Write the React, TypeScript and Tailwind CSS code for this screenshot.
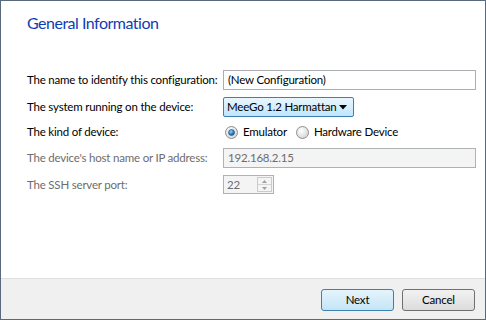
import React from "react"

const Radio = ({ checked }: { checked?: boolean }) => (
  <svg width="13" height="13" viewBox="0 0 13 13" className="shrink-0">
    <defs>
      <radialGradient id={checked ? "rg1" : "rg0"} cx="0.4" cy="0.35" r="0.7">
        <stop offset="0" stopColor="#ffffff" />
        <stop offset="1" stopColor="#d4d4d4" />
      </radialGradient>
      <radialGradient id="dot" cx="0.4" cy="0.35" r="0.7">
        <stop offset="0" stopColor="#9fd4f5" />
        <stop offset="0.6" stopColor="#2a7fc9" />
        <stop offset="1" stopColor="#134f8c" />
      </radialGradient>
    </defs>
    <circle cx="6.5" cy="6.5" r="6" fill={`url(#${checked ? "rg1" : "rg0"})`} stroke="#8e8f8f" />
    {checked && <circle cx="6.5" cy="6.5" r="3" fill="url(#dot)" stroke="#1b4e82" strokeWidth="0.6" />}
  </svg>
)

function Label({ children, disabled }: { children: React.ReactNode; disabled?: boolean }) {
  return (
    <div className={`w-[196px] shrink-0 whitespace-nowrap ${disabled ? "text-[#6d6d6d]" : "text-black"}`}>{children}</div>
  )
}

export default function App() {
  return (
    <div
      className="w-[486px] h-[320px] border border-[#5a6a7a] bg-white flex flex-col text-[11.5px] tracking-[-0.2px] leading-[16px] whitespace-nowrap"
      style={{ fontFamily: '"Segoe UI", Lato, sans-serif' }}
    >
      <div className="flex-1 pl-[26px] pr-[9px]">
        <div className="mt-[11px] text-[16px] tracking-[-0.5px] leading-[22px] text-[#0f3cb4]">General Information</div>

        <div className="flex items-center h-[20px] mt-[36px]">
          <Label>The name to identify this configuration:</Label>
          <div className="flex-1 h-[20px] border border-[#abadb3] px-[4px] flex items-center bg-white">
            (New Configuration)
          </div>
        </div>

        <div className="flex items-center h-[20px] mt-[7px]">
          <Label>The system running on the device:</Label>
          <div className="w-[131px] h-[20px] border border-[#3c7fb1] rounded-[2px] bg-gradient-to-b from-[#eaf6fd] to-[#bee6fd] flex items-center pl-[3px] pr-[6px]">
            <span className="flex-1">MeeGo 1.2 Harmattan</span>
            <svg width="8" height="5" viewBox="0 0 8 5">
              <path d="M0 0 H8 L4 4.5 Z" fill="#000" />
            </svg>
          </div>
        </div>

        <div className="flex items-center h-[20px] mt-[5px]">
          <Label>The kind of device:</Label>
          <div className="flex items-center gap-[5px] pl-[2px]">
            <Radio checked />
            <span>Emulator</span>
          </div>
          <div className="flex items-center gap-[5px] ml-[9px]">
            <Radio />
            <span>Hardware Device</span>
          </div>
        </div>

        <div className="flex items-center h-[20px] mt-[6px]">
          <Label disabled>The device's host name or IP address:</Label>
          <div className="flex-1 h-[20px] border border-[#adb2b5] bg-[#f4f4f4] px-[4px] flex items-center text-[#6d6d6d]">
            192.168.2.15
          </div>
        </div>

        <div className="flex items-center h-[19px] mt-[7px]">
          <Label disabled>The SSH server port:</Label>
          <div className="w-[51px] h-[19px] border border-[#adb2b5] bg-[#f4f4f4] flex items-stretch text-[#6d6d6d]">
            <span className="flex-1 pl-[3px] flex items-center">22</span>
            <div className="w-[15px] my-[1px] mr-[1px] border border-[#c9cbcd] flex flex-col bg-[#f4f4f4]">
              <div className="flex-1 flex items-center justify-center border-b border-[#d5d5d5]">
                <svg width="5" height="3" viewBox="0 0 5 3"><path d="M0 3 L2.5 0 L5 3 Z" fill="#a0a0a0" /></svg>
              </div>
              <div className="flex-1 flex items-center justify-center">
                <svg width="5" height="3" viewBox="0 0 5 3"><path d="M0 0 L2.5 3 L5 0 Z" fill="#a0a0a0" /></svg>
              </div>
            </div>
          </div>
        </div>
      </div>

      <div className="h-[41px] border-t border-[#dfdfdf] bg-[#f0f0f0] flex items-center justify-end gap-[8px] pr-[10px] pt-[1px]">
        <button className="w-[73px] h-[22px] rounded-[3px] border border-[#3c7fb1] bg-gradient-to-b from-[#e5f4fc] to-[#c4e5f6] text-black">
          Next
        </button>
        <button className="w-[73px] h-[22px] rounded-[3px] border border-[#707070] bg-gradient-to-b from-[#f2f2f2] to-[#dcdcdc] text-black">
          Cancel
        </button>
      </div>
    </div>
  )
}
